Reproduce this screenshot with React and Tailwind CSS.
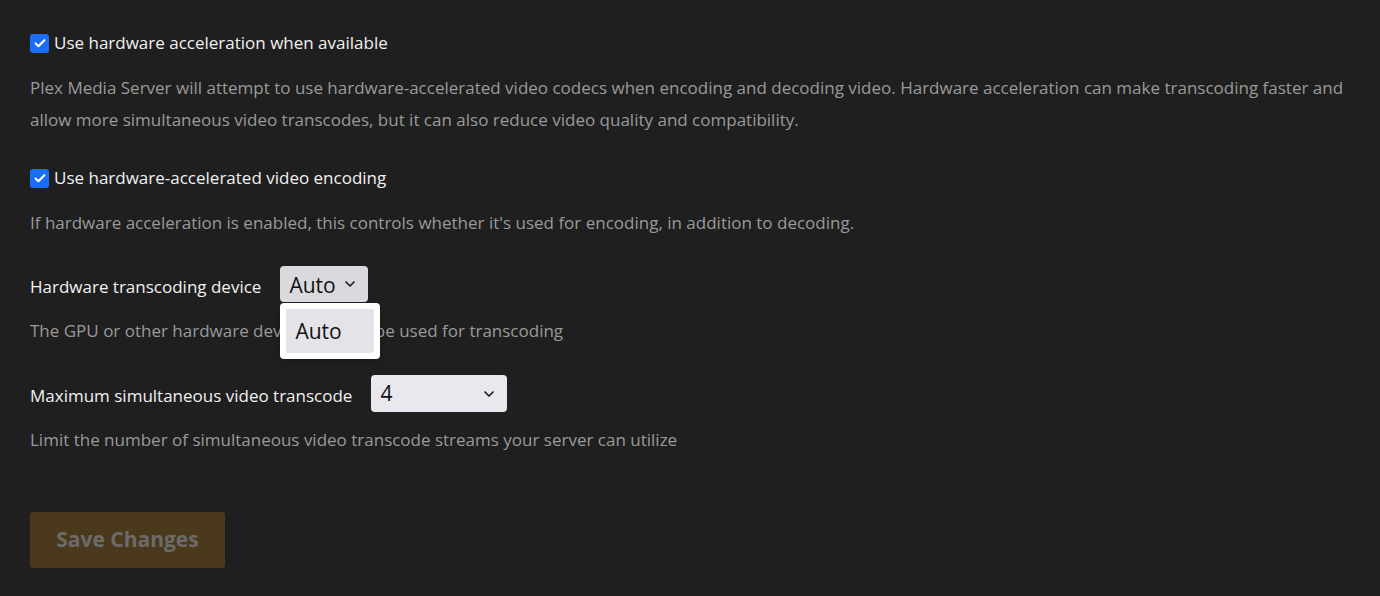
import { ChevronDown } from "lucide-react";

const Check = ({ label }) => (
  <label className="flex items-center h-5 text-[17px] text-[#f1f1f1]">
    <span className="w-[19px] h-[19px] rounded-[3px] bg-[#1a6ef5] flex items-center justify-center mr-[5px]">
      <svg viewBox="0 0 16 16" className="w-[14px] h-[14px]" fill="none">
        <path d="M3 8.5l3.2 3.2L13 4.8" stroke="white" strokeWidth="2.4" strokeLinecap="round" strokeLinejoin="round" />
      </svg>
    </span>
    {label}
  </label>
);

const Desc = ({ children, className = "" }) => (
  <p className={"text-[17px] leading-8 text-[#9a9a9a] " + className}>{children}</p>
);

const App = () => {
  return (
    <div
      className="min-h-[596px] bg-[#1f1f1f] px-[30px] pt-[33px]"
      style={{ fontFamily: '"Open Sans", "Noto Sans", sans-serif' }}
    >
      <Check label="Use hardware acceleration when available" />
      <Desc className="mt-[19px] w-[1330px]">
        Plex Media Server will attempt to use hardware-accelerated video codecs when encoding and decoding video. Hardware acceleration can make transcoding faster and allow more simultaneous video transcodes, but it can also reduce video quality and compatibility.
      </Desc>

      <div className="mt-8">
        <Check label="Use hardware-accelerated video encoding" />
      </div>
      <Desc className="mt-[19px]">
        If hardware acceleration is enabled, this controls whether it's used for encoding, in addition to decoding.
      </Desc>

      <div className="mt-[27px] flex items-center gap-[19px]">
        <span className="text-[17px] text-[#f1f1f1] pt-[5px]">Hardware transcoding device</span>
        <div className="relative">
          <button className="h-9 w-[88px] rounded-[4px] bg-[#d9d9de] pl-[9px] pr-[10px] pt-[3px] flex items-center justify-between text-[21px] text-[#111]">
            Auto
            <ChevronDown size={16} strokeWidth={2.6} className="text-[#222] -mt-[3px]" />
          </button>
          <div className="absolute left-0 top-[37px] w-[100px] h-[56px] rounded-[4px] bg-white p-[6px] shadow-md z-10">
            <div className="h-full rounded-[2px] bg-[#e4e3e9] flex items-center pl-[9px] pt-[2px] text-[21px] text-[#111]">
              Auto
            </div>
          </div>
        </div>
      </div>
      <Desc className="mt-[13px]">
        The GPU or other hardware device that will be used for transcoding
      </Desc>

      <div className="mt-[28px] flex items-center gap-[19px]">
        <span className="text-[17px] text-[#f1f1f1] pt-1">Maximum simultaneous video transcode</span>
        <button className="h-[37px] w-[136px] rounded-[4px] bg-[#e8e8ee] pl-[9px] pr-[10px] flex items-center justify-between text-[21px] text-[#111]">
          4
          <ChevronDown size={16} strokeWidth={2.6} className="text-[#222]" />
        </button>
      </div>
      <Desc className="mt-3">
        Limit the number of simultaneous video transcode streams your server can utilize
      </Desc>

      <button className="mt-[56px] h-14 w-[195px] rounded-[3px] bg-[#4b391d] text-[21px] font-bold text-[#6c6b69]">
        Save Changes
      </button>
    </div>
  );
};

export default App;
